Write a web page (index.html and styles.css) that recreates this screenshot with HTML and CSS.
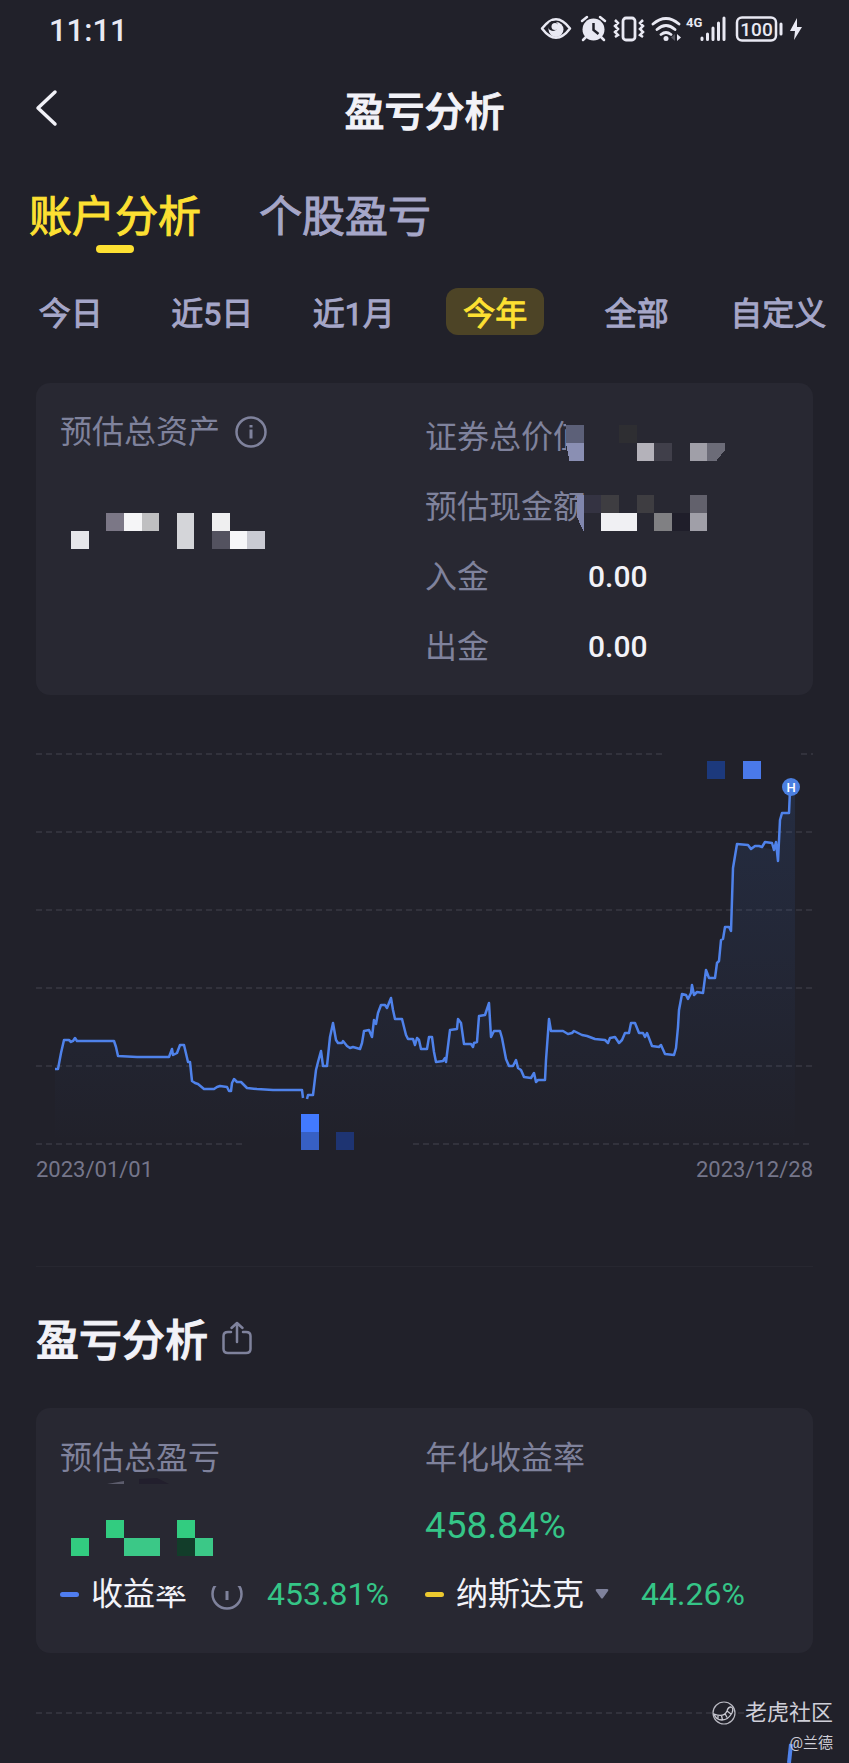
FILE: index.html
```html
<!DOCTYPE html>
<html lang="zh-CN">

<head>
    <meta charset="UTF-8">
    <meta name="viewport" content="width=device-width, initial-scale=1.0">
    <title>盈亏分析</title>
    <link rel="stylesheet" href="styles.css">
</head>

<body>
    <div class="status-bar">
        <span class="clock">11:11</span>
        <svg class="status-icons" width="264" height="30" viewBox="0 0 264 30" aria-hidden="true">
            <!-- eye -->
            <path d="M2 14.500Q16 -4 30 14.500Q16 33 2 14.500Z" fill="none" stroke="#e9e9f3" stroke-width="2.500" stroke-linejoin="round" />
            <circle cx="16" cy="15.500" r="7.500" fill="#e9e9f3" />
            <circle cx="13" cy="12" r="5" fill="#21212a" />
            <circle cx="15" cy="12.500" r="3.500" fill="#e9e9f3" />
            <!-- alarm -->
            <circle cx="53.500" cy="15.500" r="11" fill="#e9e9f3" />
            <path d="M42 7l5-4M65 7l-5-4M46 23l-3 3M61 23l3 3" stroke="#e9e9f3" stroke-width="2.500" stroke-linecap="round" />
            <path d="M53.500 9v7l5 4" fill="none" stroke="#21212a" stroke-width="2.500" />
            <!-- vibrate -->
            <rect x="83" y="4" width="12" height="22" rx="3" fill="none" stroke="#e9e9f3" stroke-width="2.800" />
            <path d="M75 6l3 3-3 3 3 3-3 3 3 3-3 2M103 6l-3 3 3 3-3 3 3 3-3 3 3 2" fill="none" stroke="#e9e9f3" stroke-width="2.500" />
            <!-- wifi -->
            <path d="M113 10q13-11 26 0M117 15.500q9-8 18 0M121 20.500q5-4 10 0" fill="none" stroke="#e9e9f3" stroke-width="2.800" stroke-linecap="round" />
            <circle cx="126" cy="24.500" r="2.500" fill="#e9e9f3" />
            <path d="M137 20l4 3.500-4 3.500z" fill="#e9e9f3" />
            <path d="M135 20l-4 3.500 4 3.500z" fill="#55555f" />
            <!-- signal -->
            <text class="net-text" x="146" y="13">4G</text>
            <path d="M162 24v1.500M167.500 20v5.500M173 14v11.500M178.500 9v16.500M184 4v21.500" stroke="#e9e9f3" stroke-width="3" stroke-linecap="round" />
            <!-- battery -->
            <rect x="197" y="3.500" width="39" height="23" rx="5" fill="none" stroke="#e9e9f3" stroke-width="2.500" />
            <text class="battery-text" x="216.500" y="22" text-anchor="middle">100</text>
            <path d="M241 10v10" stroke="#e9e9f3" stroke-width="3" stroke-linecap="round" />
            <path d="M257 4l-7 13h5l-1 9 8-13h-5z" fill="#e9e9f3" />
        </svg>
    </div>

    <header class="header">
        <button class="back" aria-label="返回">
            <svg width="24" height="38" viewBox="0 0 24 38">
                <path d="M20 3L3 19l17 16" fill="none" stroke="#f2f2f8" stroke-width="3.500" stroke-linecap="round" stroke-linejoin="round" />
            </svg>
        </button>
        <h1>盈亏分析</h1>
    </header>

    <nav class="tabs">
        <button class="tab active">账户分析</button>
        <button class="tab">个股盈亏</button>
    </nav>

    <div class="periods">
        <button class="period">今日</button>
        <button class="period">近5日</button>
        <button class="period">近1月</button>
        <button class="period active">今年</button>
        <button class="period">全部</button>
        <button class="period">自定义</button>
    </div>

    <main>
        <section class="card assets">
            <div class="total">
                <div class="label total-label">
                    预估总资产
                    <svg class="info" width="32" height="32" viewBox="0 0 32 32" aria-hidden="true">
                        <circle cx="16" cy="16" r="14.500" fill="none" stroke="#7f829c" stroke-width="2.500" />
                        <path d="M16 13.500v9M16 9v2.500" stroke="#7f829c" stroke-width="3" />
                    </svg>
                </div>
                <svg class="mosaic" width="194" height="36" viewBox="0 0 11 2" preserveAspectRatio="none" shape-rendering="crispEdges" aria-hidden="true">
                    <path d="M0 1h1v1h-1z" fill="#e6e6ea" />
                    <path d="M2 0h1v1h-1z" fill="#7b7786" />
                    <path d="M3 0h1v1h-1z" fill="#f5f5f7" />
                    <path d="M4 0h1v1h-1z" fill="#bfbfc1" />
                    <path d="M6 0h1v2h-1z" fill="#d4d5d9" />
                    <path d="M8 0h1v1h-1z" fill="#efeff0" />
                    <path d="M8 1h1v1h-1z" fill="#53525f" />
                    <path d="M9 1h1v1h-1z" fill="#f6f6f9" />
                    <path d="M10 1h1v1h-1z" fill="#c9cad3" />
                </svg>
            </div>
            <div class="details">
                <div class="detail">
                    <span class="label">证券总价值</span>
                    <svg class="cover" width="159" height="36" viewBox="0 0 9 2" preserveAspectRatio="none" shape-rendering="crispEdges" aria-hidden="true">
                        <path d="M0 -1h9v3h-9z" fill="#282832" />
                        <path d="M0 0h1v1h-1z" fill="#5c6078" />
                        <path d="M0 1h1v1h-.8z" fill="#8a8fb3" />
                        <path d="M3 0h1v1h-1z" fill="#2e2e32" />
                        <path d="M4 1h1v1h-1z" fill="#b4b2ba" />
                        <path d="M5 1h1v1h-1z" fill="#403f4a" />
                        <path d="M7 1h1v1h-1z" fill="#a09fa8" />
                        <path d="M8 1h1v.4l-.5.6h-.5z" fill="#6c6c78" />
                    </svg>
                </div>
                <div class="detail">
                    <span class="label">预估现金额</span>
                    <svg class="cover" width="159" height="36" viewBox="0 0 9 2" preserveAspectRatio="none" shape-rendering="crispEdges" aria-hidden="true">
                        <path d="M1 0h8v2h-8z" fill="#282832" />
                        <path d="M.6 0h.4v2l-.4-.8z" fill="#8086ad" />
                        <path d="M1 0h1v1h-1z" fill="#343342" />
                        <path d="M2 0h1v1h-1zM4 0h1v1h-1z" fill="#3e3d41" />
                        <path d="M7 0h1v1h-1z" fill="#62616c" />
                        <path d="M2 1h2v1h-2z" fill="#f0f0f3" />
                        <path d="M5 1h1v1h-1z" fill="#808083" />
                        <path d="M6 1h1v1h-1z" fill="#1f1e2a" />
                        <path d="M7 1h1v1h-1z" fill="#a09fa8" />
                    </svg>
                </div>
                <div class="detail">
                    <span class="label">入金</span>
                    <span class="amount">0.00</span>
                </div>
                <div class="detail">
                    <span class="label">出金</span>
                    <span class="amount">0.00</span>
                </div>
            </div>
        </section>

        <section class="chart">
            <svg class="plot" viewBox="0 0 777 404" role="img" aria-label="资产走势">
                <defs>
                    <linearGradient id="area" gradientUnits="userSpaceOnUse" x1="0" y1="40" x2="0" y2="394">
                        <stop offset="0" stop-color="#3c78dc" stop-opacity=".13" />
                        <stop offset="1" stop-color="#3c78dc" stop-opacity="0" />
                    </linearGradient>
                </defs>
                <path class="grid" d="M0 4H628M765 4H777M0 82H777M0 160H777M0 238H777M0 316H777M0 394H206M377 394H777" />
                <path fill="url(#area)" d="M19 394V319H22L28 290L41 291H78L82 306L133 307L144 295H148L156 331L168 339H195L198 329L211 338L237 340H266L271 349L277 345L285 301L291 316L297 273L302 293L314 298L324 299L328 281L336 287L345 255L355 248L359 269H366L372 289L383 290L385 299H391L396 287L400 312H410L414 280L422 269L428 294H441L443 266L453 253L455 287L464 281L473 316L485 320L495 328L509 330L513 269L515 281L559 289L583 293L597 273L607 283L616 296L629 304L638 305L646 244L667 243L670 220L679 228L689 177L695 181L697 118L701 94L742 100L746 63H753L754 40H759V394Z" />
                <path class="line" stroke-width="2.500" d="M19 319L22 319L25 303L28 290L33 290L35 292L37 291L39 288L41 291L78 291L80 297L82 306L101 307L133 307L136 299L137 305L141 303L144 295L148 295L152 312L154 312L156 331L159 333L162 334L168 339L178 339L181 337L184 336L191 337L193 341L195 341L196 333L198 329L201 332L205 332L208 335L211 338L221 339L237 340L266 340L267 348M271 349L272 345L277 345L280 320L282 312L285 301L287 316L291 316L294 287L297 273L300 290L302 293L306 293L307 291L311 296L314 298L317 297L324 299L326 293L328 281L333 280L336 287L338 270L340 274L342 263L345 255L349 255L351 258L355 248L357 260L359 269L366 269L367 273L370 285L372 289L377 289L379 295L381 288L383 290L385 299L391 299L393 287L396 287L398 302L400 312L407 311L409 308L410 312L414 280L421 279L422 269L425 273L428 294L435 294L437 297L438 293L441 292L443 266L449 265L453 253L455 287L458 281L464 281L466 288L470 309L473 316L477 316L480 310L482 318L485 320L488 327L495 328L498 323L500 332L502 330L509 330L510 310L513 269L515 281L527 281L532 284L536 283L538 281L542 283L546 285L551 286L559 289L569 290L572 293L574 288L579 287L583 293L586 290L589 283L593 283L595 273L599 273L603 283L607 283L609 287L611 283L616 296L623 297L625 295L629 304L638 305L640 298L642 277L643 260L646 244L650 245L652 249L655 243L656 235L658 245L661 242L667 243L670 220L673 228L679 228L681 213L683 211L685 190L687 189L689 177L693 177L695 181L697 118L701 94L712 95L715 99L719 96L723 96L726 97L729 92L736 93L738 100L740 92L742 111L744 70L746 63L753 63L754 40" />
                <path fill="#1c397c" d="M671 11h18v18h-18z" />
                <path fill="#4a79e9" d="M707 11h18v18h-18z" />
                <path fill="#427aff" d="M265 364h18v18h-18z" />
                <path fill="#3760c4" d="M265 382h18v18h-18z" />
                <path fill="#1e3472" d="M300 382h18v18h-18z" />
                <circle cx="755" cy="37" r="9" fill="#4b7fe0" />
                <text class="marker" x="755" y="42" text-anchor="middle">H</text>
            </svg>
            <div class="dates">
                <span>2023/01/01</span>
                <span>2023/12/28</span>
            </div>
        </section>

        <div class="section-title">
            <h2>盈亏分析</h2>
            <button class="share" aria-label="分享">
                <svg width="30" height="34" viewBox="0 0 30 34">
                    <path d="M9 11H6q-4.500 0-4.500 4v13q0 4 4.500 4h18q4.500 0 4.500-4V15q0-4-4.500-4h-3M15 21V2M9.500 7L15 2l5.500 5" fill="none" stroke="#7f829c" stroke-width="2.500" stroke-linecap="round" stroke-linejoin="round" />
                </svg>
            </button>
        </div>

        <section class="card returns">
            <div class="column">
                <div class="row label">预估总盈亏</div>
                <div class="row hidden-value">
                    <svg class="profit-mosaic" width="180" height="68" viewBox="0 0 180 68" aria-hidden="true">
                        <path d="M36-8l17-3v3z" fill="#5c5c6c" />
                        <path d="M68-8v-5l18-1 12 6z" fill="#221f2d" />
                        <path d="M35 28h18v18h-18zM0 46h18v18h-18zM106 28h18v18h-18z" fill="#32cc80" />
                        <path d="M53 46h36v18h-36zM124 46h18v18h-18z" fill="#3bc887" />
                        <path d="M106 46h18v18h-18z" fill="#123d2a" />
                        <path d="M84 70h92v24h-92z" fill="#282832" />
                    </svg>
                </div>
                <div class="row legend">
                    <span class="dash blue"></span>
                    <span class="name">收益率</span>
                    <svg class="info" width="32" height="32" viewBox="0 0 32 32" aria-hidden="true">
                        <circle cx="16" cy="16" r="14.500" fill="none" stroke="#7f829c" stroke-width="2.500" />
                        <path d="M16 13v9" stroke="#7f829c" stroke-width="3" />
                    </svg>
                    <span class="percent">453.81%</span>
                </div>
            </div>
            <div class="column">
                <div class="row label">年化收益率</div>
                <div class="row percent large">458.84%</div>
                <div class="row legend">
                    <span class="dash yellow"></span>
                    <select class="index-select" aria-label="对比指数">
                        <option>纳斯达克</option>
                    </select>
                    <svg class="arrow" width="14" height="12" viewBox="0 0 14 12" aria-hidden="true">
                        <path d="M2 1h10q2 0 1 2l-5 7q-1 1-2 0l-5-7q-1-2 1-2z" fill="#7f829c" />
                    </svg>
                    <span class="percent">44.26%</span>
                </div>
            </div>
        </section>

        <svg class="plot next-plot" viewBox="0 0 777 60" aria-hidden="true">
            <path class="grid" d="M0 10H676M702 10H710" />
            <path class="line" stroke-width="4" d="M755 41L753 60" />
        </svg>
    </main>

    <div class="watermark">
        <div class="brand">
            <svg width="24" height="24" viewBox="0 0 24 24" aria-hidden="true">
                <circle cx="12" cy="12" r="11" fill="none" stroke="#b9b9c2" stroke-width="1.200" />
                <path d="M2 13q10 4 13-3q1-4 4-4q3 1 1 6q-4 7-10 7q-6 0-8-6zM6 14.500v4M9.500 14.500l1 4.500M13 12.500l2 4M15 10l4 3" fill="none" stroke="#c9c9d2" stroke-width="1.300" />
            </svg>
            老虎社区
        </div>
        <div class="author">@兰德</div>
    </div>
</body>

</html>
```
FILE: styles.css
```css
* {
    box-sizing: border-box;
}

body {
    position: relative;
    margin: 0;
    background-color: #21212a;
    color: #f2f2f8;
    font-family: Roboto, "Noto Sans CJK SC", sans-serif;
}

h1,
h2 {
    margin: 0;
    font-weight: 500;
    -webkit-text-stroke: 1px currentColor;
}

button,
select {
    padding: 0;
    border: none;
    background: none;
    color: inherit;
    font-family: inherit;
    cursor: pointer;
}

svg {
    display: block;
    flex: none;
}

.status-bar {
    display: flex;
    justify-content: space-between;
    align-items: center;
    height: 58px;
    padding: 0 45px 0 49px;
}

.clock {
    padding-top: 2px;
    color: #e9e9f3;
    font-size: 31px;
    font-weight: 500;
}

.net-text {
    fill: #e9e9f3;
    font-size: 13px;
    font-weight: 700;
}

.battery-text {
    fill: #e9e9f3;
    font-size: 19px;
    font-weight: 500;
}

.header {
    display: grid;
    grid-template-columns: 60px 1fr 60px;
    align-items: center;
    height: 106px;
}

.back {
    padding-left: 35px;
    padding-bottom: 6px;
}

.header h1 {
    padding-top: 4px;
    font-size: 40px;
    line-height: 60px;
    text-align: center;
}

.tabs {
    display: flex;
    gap: 58px;
    padding: 19px 29px 0;
}

.tab {
    position: relative;
    height: 70px;
    padding-bottom: 3px;
    color: #a5a6c8;
    font-size: 43px;
    line-height: 64px;
    -webkit-text-stroke: 1px currentColor;
}

.tab.active {
    color: #fde032;
}

.tab.active::after {
    content: "";
    position: absolute;
    bottom: 0;
    left: 50%;
    width: 38px;
    height: 8px;
    margin-left: -19px;
    border-radius: 4px;
    background-color: #fde032;
}

.periods {
    display: grid;
    grid-template-columns: repeat(6, 1fr);
    justify-items: center;
    margin-top: 35px;
}

.period {
    padding: 5px 17px 0;
    border-radius: 12px;
    color: #a5a6c8;
    font-size: 32px;
    line-height: 42px;
    white-space: nowrap;
    -webkit-text-stroke: 1px currentColor;
}

.period.active {
    background-color: #4d4426;
    color: #fde032;
}

main {
    padding: 0 36px;
}

.card {
    display: grid;
    grid-template-columns: 365px 1fr;
    border-radius: 14px;
    background-color: #282832;
}

.label {
    color: #7f829c;
    font-size: 32px;
}

.assets {
    margin-top: 48px;
    padding: 19px 24px 13px;
}

.total-label {
    display: flex;
    align-items: center;
    gap: 15px;
    line-height: 60px;
}

.mosaic {
    margin: 51px 0 0 11px;
}

.detail {
    position: relative;
    display: grid;
    grid-template-columns: 163px 1fr;
    line-height: 70px;
}

.cover {
    position: absolute;
    top: 23px;
    left: 141px;
    overflow: visible;
}

.amount {
    font-size: 30px;
    font-weight: 500;
}

.chart {
    margin-top: 55px;
}

.plot {
    width: 100%;
}

.grid {
    fill: none;
    stroke: #45454f;
    stroke-width: 1;
    stroke-dasharray: 6 4;
}

.line {
    fill: none;
    stroke: #4f82ea;
    stroke-linejoin: round;
}

.marker {
    fill: #fff;
    font-size: 13px;
    font-weight: 500;
}

.dates {
    display: flex;
    justify-content: space-between;
    color: #75768a;
    font-size: 22px;
    line-height: 32px;
}

.section-title {
    display: flex;
    align-items: center;
    gap: 14px;
    margin-top: 80px;
    padding-top: 44px;
    border-top: 1px solid #272730;
}

.section-title h2 {
    font-size: 43px;
    line-height: 60px;
}

.share {
    padding-bottom: 6px;
}

.returns {
    margin-top: 37px;
    padding: 16px 24px 25px;
}

.row {
    height: 68px;
    line-height: 68px;
}

.hidden-value {
    position: relative;
}

.profit-mosaic {
    position: absolute;
    top: 0;
    left: 11px;
    overflow: visible;
}

.legend {
    display: flex;
    align-items: center;
}

.dash {
    width: 19px;
    height: 5px;
    margin-right: 12px;
    border-radius: 3px;
}

.blue {
    background-color: #4f7df0;
}

.yellow {
    background-color: #ecc92f;
}

.name,
.index-select {
    color: #f2f2f8;
    font-size: 32px;
}

.index-select {
    appearance: none;
}

.legend .info {
    margin: 0 24px;
}

.arrow {
    margin: 0 32px 0 10px;
}

.percent {
    color: #35c587;
    font-size: 32px;
}

.large {
    font-size: 37px;
}

.next-plot {
    margin-top: 50px;
}

/* sits on top of the page in the bottom right corner */
.watermark {
    position: absolute;
    right: 16px;
    bottom: 9px;
    color: #cfcfd8;
    text-align: right;
}

.brand {
    display: flex;
    align-items: center;
    gap: 9px;
    font-size: 22px;
    line-height: 34px;
}

.author {
    margin-top: 2px;
    font-size: 15px;
    line-height: 22px;
}
```
